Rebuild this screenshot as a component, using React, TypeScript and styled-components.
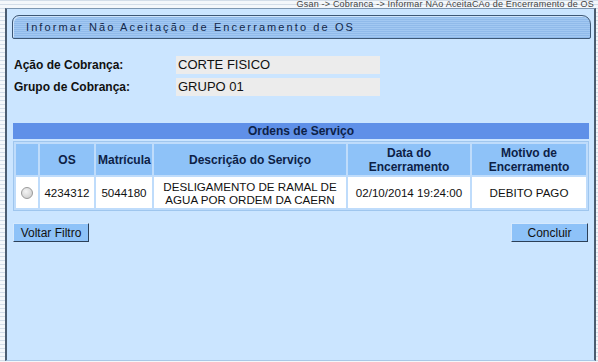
import * as React from "react"
import styled, { createGlobalStyle } from "styled-components"

const GlobalStyle = createGlobalStyle`
  html, body {
    margin: 0;
    padding: 0;
    height: 100%;
  }
  body {
    font-family: "Liberation Sans", Arial, sans-serif;
    background-color: #f4f7fa;
    background-image: repeating-linear-gradient(
      to bottom,
      #d3dde8 0px,
      #d3dde8 1px,
      #f4f7fa 1px,
      #f4f7fa 4px
    );
    overflow: hidden;
  }
`

interface IOrdem {
  os: string
  matricula: string
  descricao: string
  data: string
  motivo: string
}

const ordens: IOrdem[] = [
  {
    os: "4234312",
    matricula: "5044180",
    descricao: "DESLIGAMENTO DE RAMAL DE AGUA POR ORDEM DA CAERN",
    data: "02/10/2014 19:24:00",
    motivo: "DEBITO PAGO",
  },
]

// column widths measured off the old gsan screen
const colWidths = [22, 54, 56, 192, 122, 0]

export default function App() {
  return (
    <Page>
      <GlobalStyle />
      <Breadcrumb>Gsan -&gt; Cobranca -&gt; Informar NAo AceitaCAo de Encerramento de OS</Breadcrumb>
      <Panel>
        <TitleBar>Informar Não Aceitação de Encerramento de OS</TitleBar>

        <FormArea>
          <FieldRow>
            <Label>Ação de Cobrança:</Label>
            <ValueBox>CORTE FISICO</ValueBox>
          </FieldRow>
          <FieldRow>
            <Label>Grupo de Cobrança:</Label>
            <ValueBox>GRUPO 01</ValueBox>
          </FieldRow>
        </FormArea>

        <TableSection>
          <TableCaption>Ordens de Serviço</TableCaption>
          <Grid>
            <colgroup>
              {colWidths.map((w, i) => (
                <col key={i} style={w ? { width: w } : undefined} />
              ))}
            </colgroup>
            <thead>
              <tr>
                <HeadCell />
                <HeadCell>OS</HeadCell>
                <HeadCell>Matrícula</HeadCell>
                <HeadCell>Descrição do Serviço</HeadCell>
                <HeadCell>
                  Data do
                  <br />
                  Encerramento
                </HeadCell>
                <HeadCell>
                  Motivo de
                  <br />
                  Encerramento
                </HeadCell>
              </tr>
            </thead>
            <tbody>
              {ordens.map(o => (
                <tr key={o.os}>
                  <BodyCell>
                    <Radio />
                  </BodyCell>
                  <BodyCell>{o.os}</BodyCell>
                  <BodyCell>{o.matricula}</BodyCell>
                  <BodyCell>{o.descricao}</BodyCell>
                  <BodyCell>{o.data}</BodyCell>
                  <BodyCell>{o.motivo}</BodyCell>
                </tr>
              ))}
            </tbody>
          </Grid>
        </TableSection>

        <Actions>
          <Button width={76}>Voltar Filtro</Button>
          <Button width={77}>Concluir</Button>
        </Actions>
      </Panel>
    </Page>
  )
}

const Page = styled.div`
  display: flex;
  flex-direction: column;
  height: 362px;
`

const Breadcrumb = styled.div`
  height: 8px;
  text-align: right;
  padding-right: 4px;
  font-size: 9px;
  line-height: 8px;
  letter-spacing: 0.2px;
  color: #444;
  white-space: nowrap;
`

const Panel = styled.div`
  flex: 1;
  margin: 0 2px 1px 5px;
  background: #cbe5ff;
  border-left: 2px solid #4a5c70;
  border-right: 2px solid #4a5c70;
  border-top: 1px solid #7d96b0;
  border-bottom: 1px solid #a9c8e6;
  padding: 6px 3px 0 5px;
  display: flex;
  flex-direction: column;
`

const TitleBar = styled.div`
  height: 24px;
  box-sizing: border-box;
  border: 1px solid #3d5775;
  border-radius: 7px 9px 2px 2px;
  background: repeating-linear-gradient(
    to bottom,
    #a2c8f2 0px,
    #a2c8f2 1px,
    #90baea 1px,
    #90baea 2px
  );
  box-shadow: inset 1px 1px 0 #cfe4fb;
  padding-left: 13px;
  font-size: 11px;
  line-height: 22px;
  letter-spacing: 2.1px;
  color: #13284a;
`

const FormArea = styled.div`
  margin-top: 17px;
  display: flex;
  flex-direction: column;
  gap: 4px;
  padding-left: 2px;
`

const FieldRow = styled.div`
  display: flex;
  align-items: center;
  height: 18px;
`

const Label = styled.div`
  width: 162px;
  font-size: 12px;
  font-weight: bold;
  color: #111;
`

const ValueBox = styled.div`
  width: 202px;
  height: 18px;
  background: #ececec;
  padding-left: 2px;
  font-size: 13px;
  line-height: 18px;
  color: #111;
`

const TableSection = styled.div`
  margin-top: 27px;
  margin-left: 1px;
  margin-right: 2px;
`

const TableCaption = styled.div`
  height: 16px;
  background: #5f90e8;
  text-align: center;
  font-size: 12px;
  font-weight: bold;
  line-height: 16px;
  color: #0d2146;
`

const Grid = styled.table`
  width: 100%;
  table-layout: fixed;
  border-collapse: separate;
  border-spacing: 2px;
  border: 1px solid #9fc6ee;
  background: #bfdcfb;
  margin-top: 2px;
`

const HeadCell = styled.th`
  height: 31px;
  padding: 0 2px;
  background: #8ec2f8;
  font-size: 12px;
  font-weight: bold;
  color: #0d2146;
  text-align: center;
  line-height: 14px;
`

const BodyCell = styled.td`
  height: 31px;
  padding: 0 2px;
  background: #ffffff;
  font-size: 11.6px;
  line-height: 13px;
  color: #111;
  text-align: center;
`

const Radio = styled.span`
  display: inline-block;
  width: 10px;
  height: 10px;
  border-radius: 50%;
  border: 1px solid #9a9a9a;
  background: radial-gradient(circle at 40% 35%, #f4f4f4 0%, #d0d0d0 80%);
  vertical-align: middle;
`

const Actions = styled.div`
  margin-top: 12px;
  display: flex;
  justify-content: space-between;
  padding-left: 1px;
  padding-right: 3px;
`

const Button = styled.button<{ width: number }>`
  width: ${p => p.width}px;
  height: 19px;
  padding: 0;
  background: #8ec2f8;
  border: 1px solid;
  border-color: #d6e9fd #2c4058 #2c4058 #d6e9fd;
  font-family: "Liberation Sans", Arial, sans-serif;
  font-size: 12px;
  color: #111;
`
